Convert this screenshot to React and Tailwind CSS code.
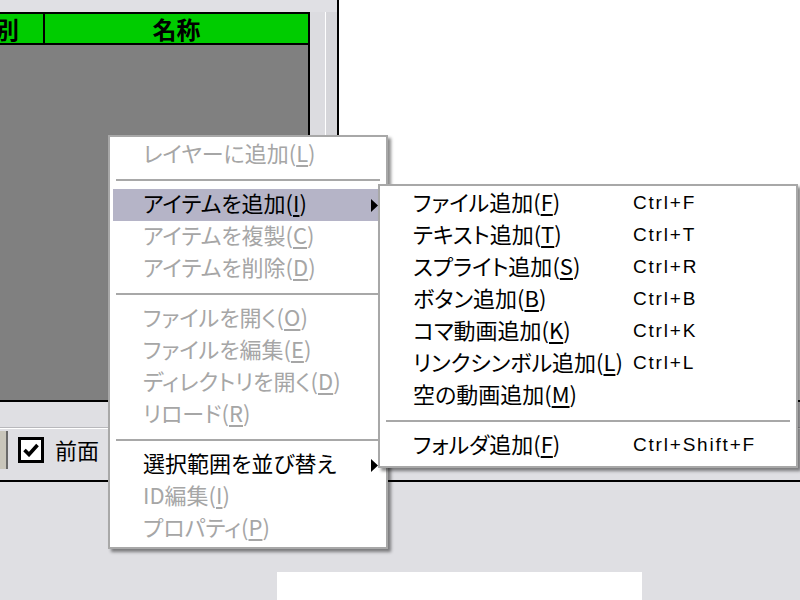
import React from "react";

const mainItems = [
  { label: "レイヤーに追加", mn: "L", disabled: true },
  { sep: true },
  { label: "アイテムを追加", mn: "I", active: true, sub: true },
  { label: "アイテムを複製", mn: "C", disabled: true },
  { label: "アイテムを削除", mn: "D", disabled: true },
  { sep: true },
  { label: "ファイルを開く", mn: "O", disabled: true },
  { label: "ファイルを編集", mn: "E", disabled: true },
  { label: "ディレクトリを開く", mn: "D", disabled: true },
  { label: "リロード", mn: "R", disabled: true },
  { sep: true },
  { label: "選択範囲を並び替え", sub: true },
  { label: "ID編集", mn: "I", disabled: true },
  { label: "プロパティ", mn: "P", disabled: true },
];

const subItems = [
  { label: "ファイル追加", mn: "F", key: "Ctrl+F" },
  { label: "テキスト追加", mn: "T", key: "Ctrl+T" },
  { label: "スプライト追加", mn: "S", key: "Ctrl+R" },
  { label: "ボタン追加", mn: "B", key: "Ctrl+B" },
  { label: "コマ動画追加", mn: "K", key: "Ctrl+K" },
  { label: "リンクシンボル追加", mn: "L", key: "Ctrl+L" },
  { label: "空の動画追加", mn: "M" },
  { sep: true },
  { label: "フォルダ追加", mn: "F", key: "Ctrl+Shift+F" },
];

function Label({ label, mn }) {
  return (
    <span className="whitespace-nowrap [font-feature-settings:'palt']">
      {label}
      {mn && (
        <>
          (<span className="underline decoration-[1.5px] underline-offset-[3px]">{mn}</span>)
        </>
      )}
    </span>
  );
}

const Arrow = () => (
  <svg width="7" height="13" viewBox="0 0 7 13" className="shrink-0 mt-[6px]">
    <path d="M0 0 L7 6.5 L0 13 Z" fill="#000" />
  </svg>
);

const Sep = () => (
  <div className="h-[18px] flex items-center px-[6px]">
    <div className="h-[2px] w-full bg-[#a8a8a8]" />
  </div>
);

export default function App() {
  return (
    <div className="relative w-[800px] h-[600px] overflow-hidden bg-[#dfdfe3] font-['Noto_Sans_CJK_JP',sans-serif] text-black">
      {/* upper area: list panel + canvas */}
      <div className="flex h-[400px]">
        <div className="w-[339px] flex flex-col bg-[#e0e0e4] border-r-2 border-black">
          <div className="h-[12px]" />
          <div className="flex-1 flex">
            <div className="w-[310px] flex flex-col border-r-2 border-black">
              <div className="h-[33px] flex overflow-hidden bg-[#00cc00] border-y-2 border-black text-[24px] font-bold leading-none">
                <div className="w-[98px] -ml-[53px] shrink-0 flex items-center justify-center border-r-2 border-black">
                  種別
                </div>
                <div className="flex-1 flex items-center justify-center">名称</div>
              </div>
              <div className="flex-1 bg-[#808080]" />
            </div>
            <div className="w-[15px] bg-[#dcdce0]" />
            <div className="w-px bg-white" />
            <div className="flex-1 bg-[#d6d6da]" />
          </div>
        </div>
        <div className="flex-1 bg-white" />
      </div>

      {/* toolbar */}
      <div className="h-[82px] border-y-2 border-black bg-[#dfdfe3] flex flex-col">
        <div className="h-[25px]" />
        <div className="h-px bg-[#b8b8bc]" />
        <div className="h-px bg-white" />
        <div className="flex items-center h-[42px]">
          <div className="w-[8px] h-[38px] bg-[#c9c6bb] border-r-2 border-[#6a6a6a]" />
          <div className="ml-[10px] w-[26px] h-[26px] border-[3px] border-black bg-white flex items-center justify-center">
            <svg width="16" height="14" viewBox="0 0 16 14">
              <path d="M1.5 7 L6 11.5 L14.5 2" stroke="#000" strokeWidth="3.6" fill="none" />
            </svg>
          </div>
          <span className="ml-[11px] pb-[2px] text-[22px] leading-none">前面</span>
        </div>
      </div>

      {/* bottom area */}
      <div className="pt-[90px] pl-[277px]">
        <div className="w-[365px] h-[30px] bg-white" />
      </div>

      {/* context menu */}
      <div className="absolute left-[108px] top-[135px] w-[280px] bg-white border-2 border-[#a8a8a8] py-[2px] shadow-[3px_3px_3px_rgba(0,0,0,0.45)] text-[22px] leading-none">
        {mainItems.map((it, i) =>
          it.sep ? (
            <Sep key={i} />
          ) : (
            <div
              key={i}
              className={`h-[32px] mx-[3px] pl-[30px] pr-[5px] pb-[6px] flex items-center justify-between ${
                it.active ? "bg-[#b5b4c7]" : ""
              } ${it.disabled ? "text-[#a6a6a6]" : "text-black"}`}
            >
              <Label label={it.label} mn={it.mn} />
              {it.sub && <Arrow />}
            </div>
          )
        )}
      </div>

      {/* submenu */}
      <div className="absolute left-[378px] top-[184px] w-[420px] bg-white border-2 border-[#a8a8a8] pt-[2px] pb-[4px] shadow-[3px_3px_3px_rgba(0,0,0,0.45)] text-[22px] leading-none">
        {subItems.map((it, i) =>
          it.sep ? (
            <Sep key={i} />
          ) : (
            <div key={i} className="h-[32px] mx-[3px] pl-[30px] pb-[6px] flex items-center">
              <div className="w-[220px] shrink-0">
                <Label label={it.label} mn={it.mn} />
              </div>
              {it.key && (
                <span className="pt-[3px] font-['Liberation_Sans',sans-serif] text-[19px] tracking-[1.8px]">{it.key}</span>
              )}
            </div>
          )
        )}
      </div>
    </div>
  );
}
